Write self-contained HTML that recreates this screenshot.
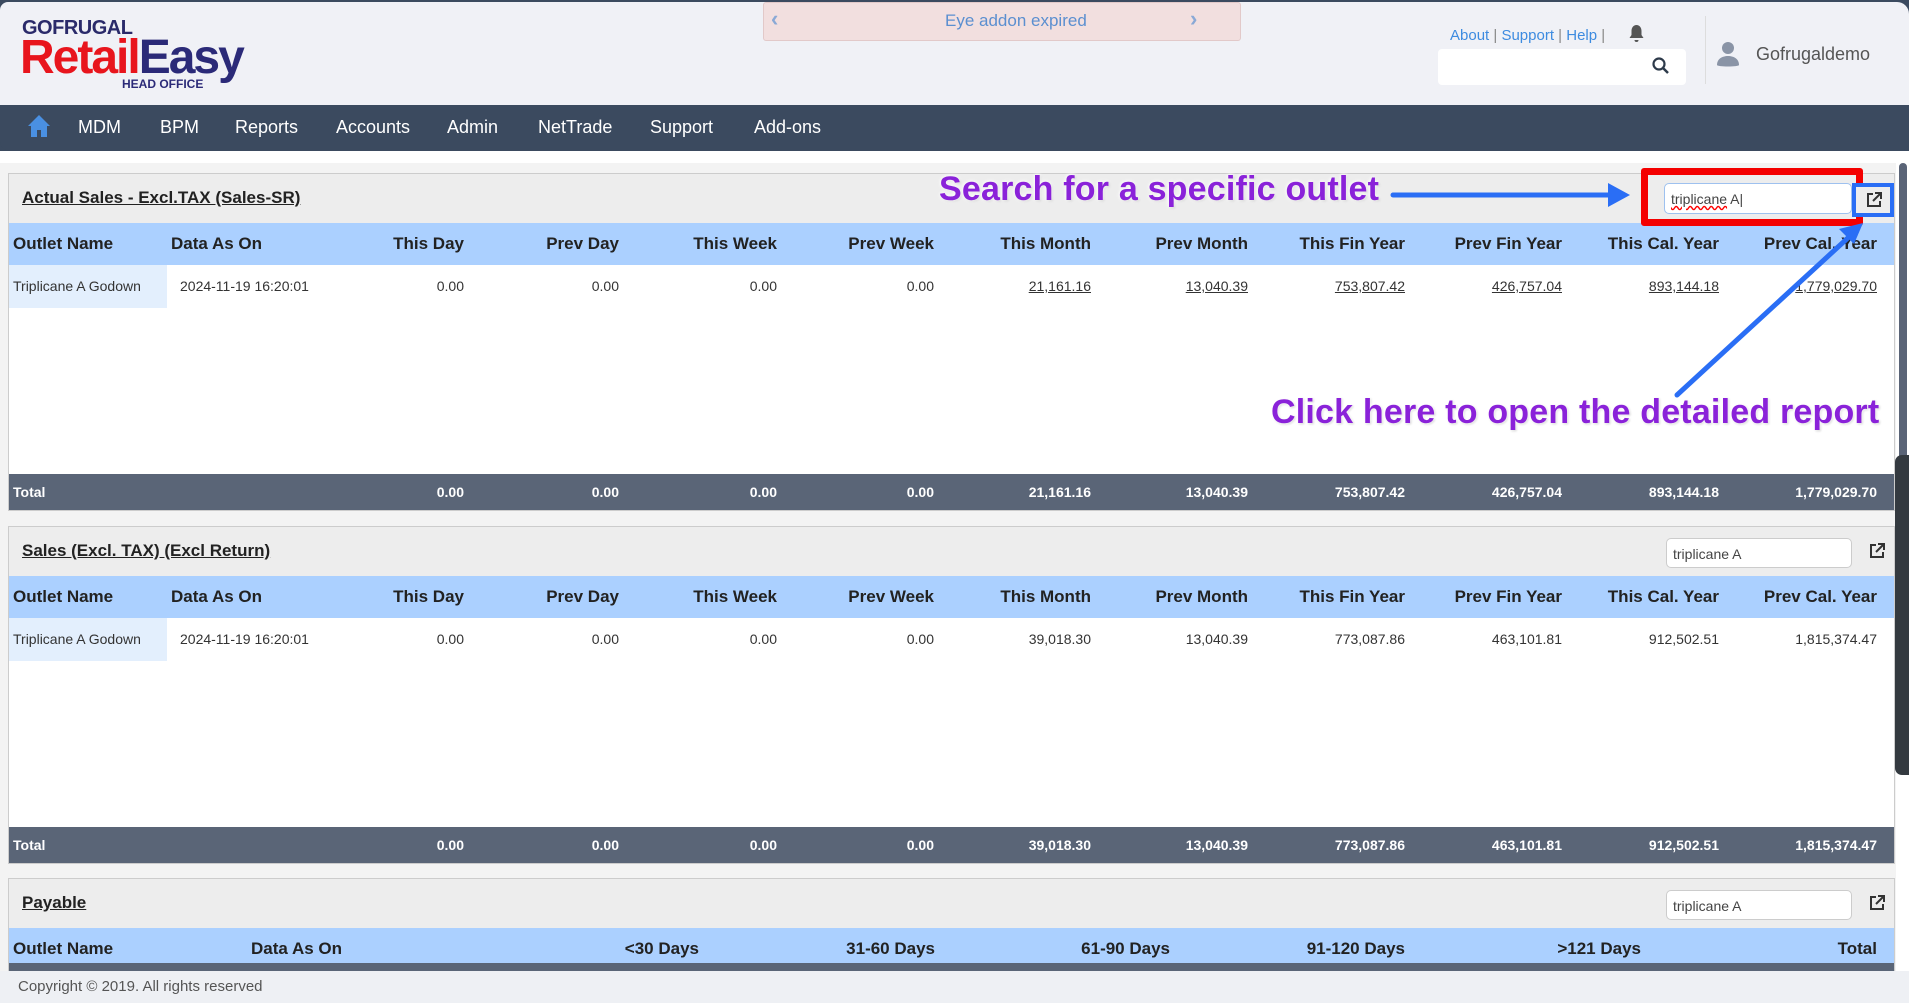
<!DOCTYPE html>
<html><head><meta charset="utf-8"><style>
*{margin:0;padding:0;box-sizing:border-box}
body{width:1909px;height:1003px;overflow:hidden;background:#3b4a5f;font-family:"Liberation Sans",sans-serif;position:relative;color:#333}
.a{position:absolute}
.hdr{left:0;top:2px;width:1909px;height:103px;background:#f0f1f6;border-radius:8px 12px 0 0}
.nav{left:0;top:105px;width:1909px;height:46px;background:#3b4a5f;border-radius:0 0 10px 10px}
.nav span{position:absolute;top:12px;color:#fff;font-size:18px}
.main{left:0;top:151px;width:1909px;height:820px;background:#fff}
.panel{position:absolute;left:8px;width:1887px;border:1px solid #ccc;background:#fff}
.ph{position:absolute;left:0;top:0;width:100%;height:49px;background:#ededed}
.pt{position:absolute;left:13px;top:14px;font-size:17px;font-weight:bold;text-decoration:underline;color:#222}
.th{position:absolute;left:0;top:49px;width:100%;height:42px;background:#abd0ff}
.th div,.tr div,.tt div{position:absolute;white-space:nowrap}
.th div{top:11px;font-size:17px;font-weight:bold;color:#222}
.tr{position:absolute;left:0;top:91px;width:100%;height:43px}
.tr div{top:13px;font-size:14px;color:#333}
.tt{position:absolute;left:0;width:100%;height:36px;background:#5a6577}
.tt div{top:10px;font-size:14px;font-weight:bold;color:#fff}
.r{width:150px;text-align:right}
.u{text-decoration:underline}
.inp{position:absolute;left:1657px;top:11px;width:186px;height:30px;border:1px solid #ccc;border-radius:5px;background:#fff;font-size:14px;color:#444;padding:7px 6px}
.ext{position:absolute;left:1860px;top:16px;width:16px;height:16px}
.ann{position:absolute;font-weight:bold;color:#8a22d9;text-shadow:0 0 3px #fff,0 0 5px #fff,1px 1px 2px #bbb;white-space:nowrap;letter-spacing:0.2px}
</style></head><body>
<div class="a hdr"></div>
<div class="a" style="left:22px;top:17px;font-size:20px;font-weight:bold;color:#2a2a6a;letter-spacing:-0.5px">GOFRUGAL</div>
<div class="a" style="left:20px;top:33px;font-size:48px;font-weight:bold;letter-spacing:-2px;line-height:50px"><span style="color:#e8151d">Retail</span><span style="color:#2b2a78">Easy</span></div>
<div class="a" style="left:122px;top:77px;font-size:12px;font-weight:bold;color:#2b2a78">HEAD OFFICE</div>
<div class="a" style="left:763px;top:2px;width:478px;height:39px;background:#f2dfdf;border:1px solid #e2c9c9;border-radius:3px"></div>
<div class="a" style="left:771px;top:6px;font-size:22px;color:#8aa9d6;font-weight:bold">‹</div>
<div class="a" style="left:1190px;top:6px;font-size:22px;color:#8aa9d6;font-weight:bold">›</div>
<div class="a" style="left:945px;top:11px;font-size:17px;color:#5b8fd0">Eye addon expired</div>
<div class="a" style="left:1450px;top:27px;font-size:15px;color:#3d8be0">About <span style="color:#888">|</span> Support <span style="color:#888">|</span> Help <span style="color:#888">|</span></div>
<svg class="a" style="left:1628px;top:24px" width="17" height="20" viewBox="0 0 17 20"><path d="M8.5 1c-3 0-5 2.5-5 6v4l-2 3h14l-2-3V7c0-3.5-2-6-5-6z M6.5 16a2 2 0 0 0 4 0z" fill="#555"/></svg>
<div class="a" style="left:1438px;top:49px;width:248px;height:36px;background:#fff;border-radius:4px"></div>
<svg class="a" style="left:1652px;top:57px" width="18" height="18" viewBox="0 0 18 18"><circle cx="7" cy="7" r="5.5" stroke="#2d3a4a" stroke-width="2.2" fill="none"/><path d="M11 11l5 5" stroke="#2d3a4a" stroke-width="2.5"/></svg>
<div class="a" style="left:1705px;top:16px;width:1px;height:68px;background:#ddd"></div>
<svg class="a" style="left:1716px;top:40px" width="24" height="30" viewBox="0 0 24 30"><circle cx="12" cy="8" r="6" fill="#8a94a6"/><path d="M1 25c0-6 5-9 11-9s11 3 11 9c0 2-22 2-22 0z" fill="#8a94a6"/></svg>
<div class="a" style="left:1756px;top:44px;font-size:18px;color:#555">Gofrugaldemo</div>
<div class="a nav">
<svg style="position:absolute;left:27px;top:9px" width="24" height="24" viewBox="0 0 24 24"><path d="M12 1L1 12h3v11h6v-7h4v7h6V12h3z" fill="#4a90e2"/></svg>
<span style="left:78px">MDM</span><span style="left:160px">BPM</span><span style="left:235px">Reports</span><span style="left:336px">Accounts</span><span style="left:447px">Admin</span><span style="left:538px">NetTrade</span><span style="left:650px">Support</span><span style="left:754px">Add-ons</span>
</div>
<div class="a main"></div>
<div class="a" style="left:0;top:163px;width:1896px;height:808px;background:#f3f3f3"></div>

<div class="panel" style="top:173px;height:338px">
<div class="ph"><div class="pt">Actual Sales - Excl.TAX (Sales-SR)</div></div>
<div class="th"><div style="left:4px">Outlet Name</div><div style="left:162px">Data As On</div>
<div class="r" style="left:305px">This Day</div><div class="r" style="left:460px">Prev Day</div><div class="r" style="left:618px">This Week</div><div class="r" style="left:775px">Prev Week</div><div class="r" style="left:932px">This Month</div><div class="r" style="left:1089px">Prev Month</div><div class="r" style="left:1246px">This Fin Year</div><div class="r" style="left:1403px">Prev Fin Year</div><div class="r" style="left:1560px">This Cal. Year</div><div class="r" style="left:1718px">Prev Cal. Year</div></div>
<div class="tr"><div style="left:0;top:0;width:158px;height:43px;background:#e3effd"></div><div style="left:4px">Triplicane A Godown</div><div style="left:171px">2024-11-19 16:20:01</div>
<div class="r" style="left:305px">0.00</div><div class="r" style="left:460px">0.00</div><div class="r" style="left:618px">0.00</div><div class="r" style="left:775px">0.00</div><div class="r u" style="left:932px">21,161.16</div><div class="r u" style="left:1089px">13,040.39</div><div class="r u" style="left:1246px">753,807.42</div><div class="r u" style="left:1403px">426,757.04</div><div class="r u" style="left:1560px">893,144.18</div><div class="r u" style="left:1718px">1,779,029.70</div></div>
<div class="tt" style="top:300px"><div style="left:4px">Total</div>
<div class="r" style="left:305px">0.00</div><div class="r" style="left:460px">0.00</div><div class="r" style="left:618px">0.00</div><div class="r" style="left:775px">0.00</div><div class="r" style="left:932px">21,161.16</div><div class="r" style="left:1089px">13,040.39</div><div class="r" style="left:1246px">753,807.42</div><div class="r" style="left:1403px">426,757.04</div><div class="r" style="left:1560px">893,144.18</div><div class="r" style="left:1718px">1,779,029.70</div></div>
</div>

<div class="panel" style="top:526px;height:338px">
<div class="ph"><div class="pt">Sales (Excl. TAX) (Excl Return)</div><div class="inp">triplicane A</div>
<svg class="ext" viewBox="0 0 16 16"><path d="M7 2H2v12h12V9" stroke="#333" stroke-width="2" fill="none"/><path d="M9 1h6v6M15 1L7 9" stroke="#333" stroke-width="2" fill="none"/></svg></div>
<div class="th"><div style="left:4px">Outlet Name</div><div style="left:162px">Data As On</div>
<div class="r" style="left:305px">This Day</div><div class="r" style="left:460px">Prev Day</div><div class="r" style="left:618px">This Week</div><div class="r" style="left:775px">Prev Week</div><div class="r" style="left:932px">This Month</div><div class="r" style="left:1089px">Prev Month</div><div class="r" style="left:1246px">This Fin Year</div><div class="r" style="left:1403px">Prev Fin Year</div><div class="r" style="left:1560px">This Cal. Year</div><div class="r" style="left:1718px">Prev Cal. Year</div></div>
<div class="tr"><div style="left:0;top:0;width:158px;height:43px;background:#e3effd"></div><div style="left:4px">Triplicane A Godown</div><div style="left:171px">2024-11-19 16:20:01</div>
<div class="r" style="left:305px">0.00</div><div class="r" style="left:460px">0.00</div><div class="r" style="left:618px">0.00</div><div class="r" style="left:775px">0.00</div><div class="r" style="left:932px">39,018.30</div><div class="r" style="left:1089px">13,040.39</div><div class="r" style="left:1246px">773,087.86</div><div class="r" style="left:1403px">463,101.81</div><div class="r" style="left:1560px">912,502.51</div><div class="r" style="left:1718px">1,815,374.47</div></div>
<div class="tt" style="top:300px"><div style="left:4px">Total</div>
<div class="r" style="left:305px">0.00</div><div class="r" style="left:460px">0.00</div><div class="r" style="left:618px">0.00</div><div class="r" style="left:775px">0.00</div><div class="r" style="left:932px">39,018.30</div><div class="r" style="left:1089px">13,040.39</div><div class="r" style="left:1246px">773,087.86</div><div class="r" style="left:1403px">463,101.81</div><div class="r" style="left:1560px">912,502.51</div><div class="r" style="left:1718px">1,815,374.47</div></div>
</div>

<div class="panel" style="top:878px;height:100px">
<div class="ph"><div class="pt">Payable</div><div class="inp">triplicane A</div>
<svg class="ext" viewBox="0 0 16 16"><path d="M7 2H2v12h12V9" stroke="#333" stroke-width="2" fill="none"/><path d="M9 1h6v6M15 1L7 9" stroke="#333" stroke-width="2" fill="none"/></svg></div>
<div class="th"><div style="left:4px">Outlet Name</div><div style="left:242px">Data As On</div>
<div class="r" style="left:540px">&lt;30 Days</div><div class="r" style="left:776px">31-60 Days</div><div class="r" style="left:1011px">61-90 Days</div><div class="r" style="left:1246px">91-120 Days</div><div class="r" style="left:1482px">&gt;121 Days</div><div class="r" style="left:1718px">Total</div></div>
<div class="tt" style="top:84px"></div>
</div>

<div class="a" style="left:1641px;top:168px;width:222px;height:58px;border:7px solid #f40000;border-radius:3px"></div>
<div class="a" style="left:1664px;top:183px;width:188px;height:31px;border:1px solid #9ec1ef;border-radius:5px;background:#fff;font-size:14px;color:#444;padding:7px 6px"><span style="text-decoration:underline wavy red">triplicane</span> A|</div>
<div class="a" style="left:1852px;top:183px;width:42px;height:34px;border:4px solid #2a6ef5;background:#ededed"></div>
<svg class="a" style="left:1866px;top:192px" width="16" height="16" viewBox="0 0 16 16"><path d="M7 2H2v12h12V9" stroke="#333" stroke-width="2" fill="none"/><path d="M9 1h6v6M15 1L7 9" stroke="#333" stroke-width="2" fill="none"/></svg>
<div class="ann" style="left:939px;top:170px;font-size:34px">Search for a specific outlet</div>
<svg class="a" style="left:0;top:0" width="1909" height="1003"><path d="M1393 195H1612" stroke="#2a6ef5" stroke-width="5" stroke-linecap="round"/><path d="M1630 195l-22-12v24z" fill="#2a6ef5"/><path d="M1677 395L1850 236" stroke="#2a6ef5" stroke-width="5" stroke-linecap="round"/><path d="M1863 223l-24 6 15 15z" fill="#2a6ef5"/></svg>
<div class="ann" style="left:1271px;top:393px;font-size:34px">Click here to open the detailed report</div>

<div class="a" style="left:1899px;top:163px;width:8px;height:300px;background:#5a6477;border-radius:4px"></div>
<div class="a" style="left:1895px;top:455px;width:14px;height:320px;background:#343a40;border-radius:7px 0 0 7px"></div>

<div class="a" style="left:0;top:971px;width:1909px;height:32px;background:#eef0f4"></div>
<div class="a" style="left:18px;top:978px;font-size:15px;color:#555">Copyright © 2019. All rights reserved</div>
</body></html>
